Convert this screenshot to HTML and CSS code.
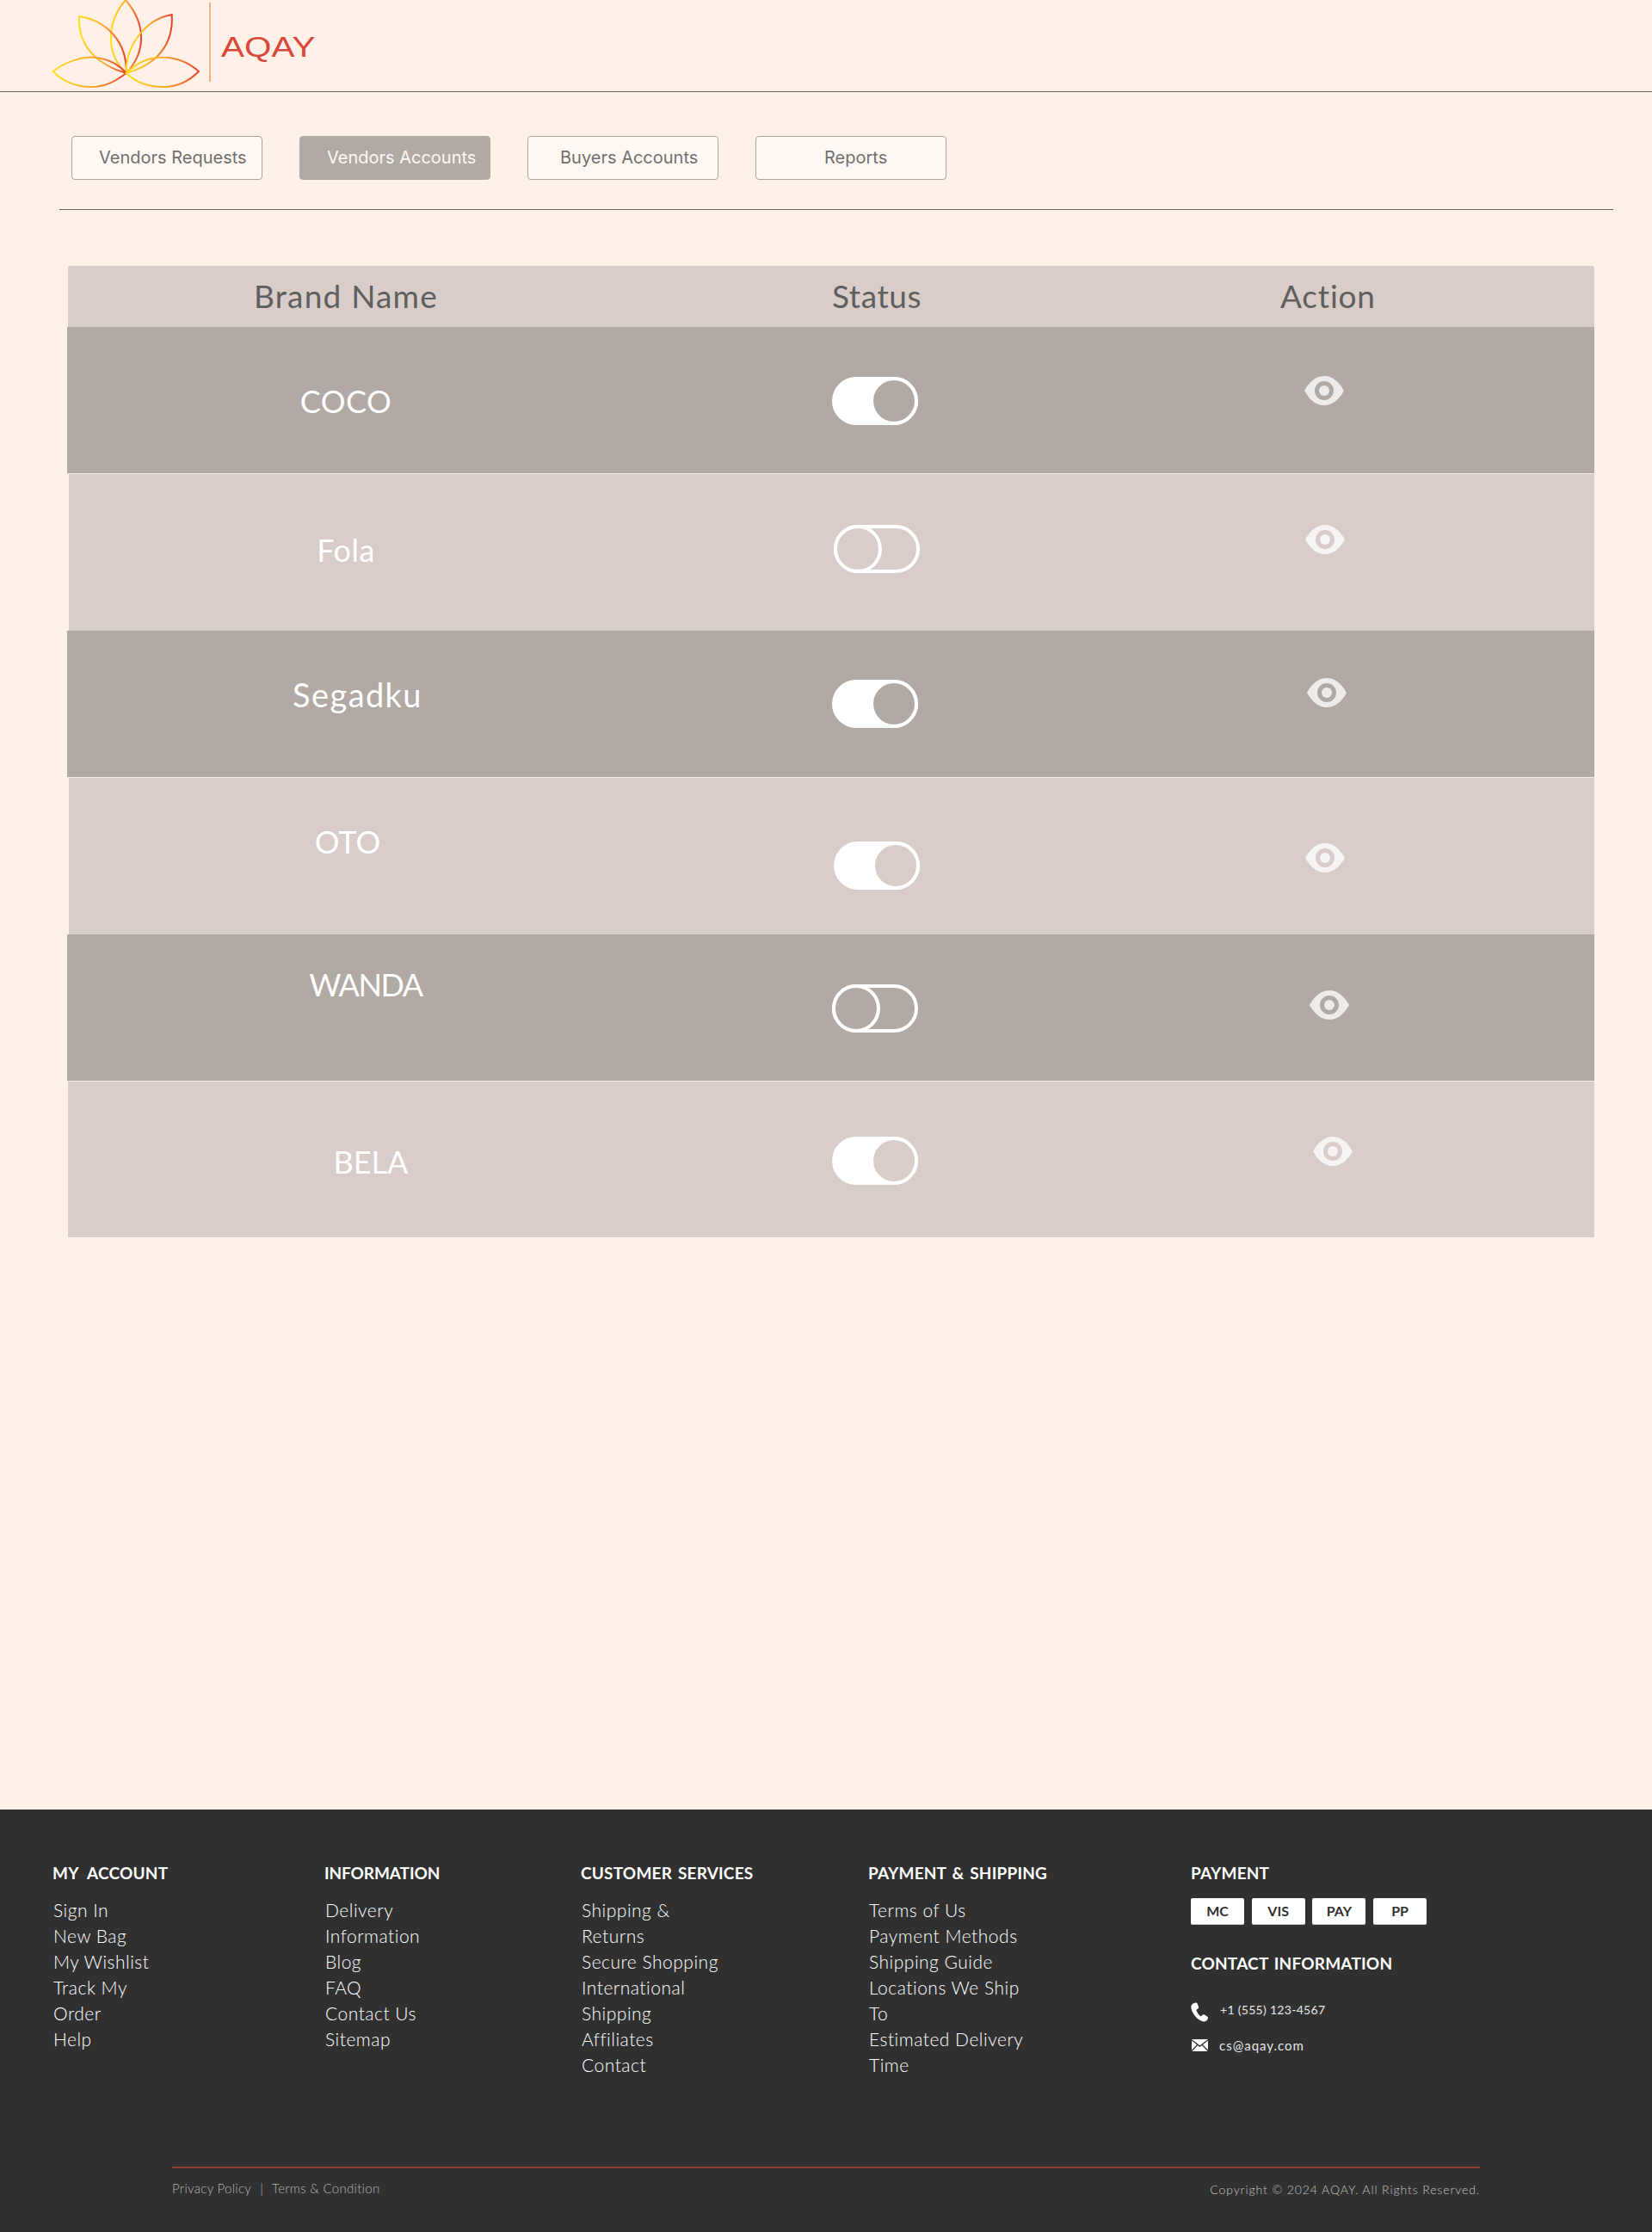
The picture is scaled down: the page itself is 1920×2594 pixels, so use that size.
FILE: index.html
```html
<!DOCTYPE html>
<html lang="en">
<head>
    <meta charset="UTF-8">
    <meta name="viewport" content="width=device-width, initial-scale=1.0">
    <title>AQAY - Vendors Accounts</title>
    <link rel="stylesheet" href="styles.css">
</head>
<body>
<svg class="svg-defs" width="0" height="0">
    <symbol id="eye-shape" viewBox="0 0 46 34">
        <path fill-rule="evenodd" d="M0 17C6 6 14 0 23 0C32 0 40 6 46 17C40 28 32 34 23 34C14 34 6 28 0 17ZM23 6A11 11 0 1 0 23 28A11 11 0 1 0 23 6Z"/>
        <circle cx="23" cy="17" r="6"/>
    </symbol>
</svg>
<div class="page">
    <header class="topbar">
        <svg class="logo" viewBox="60 0 175 106" width="175" height="106" fill="none" stroke="url(#petal)" stroke-width="2">
            <defs>
                <linearGradient id="petal" x1="0" y1="0" x2="1" y2="0">
                    <stop offset="0" stop-color="#ffdf1c"/>
                    <stop offset="0.5" stop-color="#fdb02c"/>
                    <stop offset="1" stop-color="#e8432f"/>
                </linearGradient>
            </defs>
            <path d="M146.7 85C122 62 124 25 146 0C170 28 170 60 146.7 85Z"/>
            <path d="M92 19C125 24 148 50 146.7 85C115 76 90 55 92 19Z"/>
            <path d="M146.7 85C146 52 170 22 199.7 17C202 52 182 75 146.7 85Z"/>
            <path d="M61.7 83C78 70 100 65 112 67C128 69 138 75 146.7 85C130 98 118 101 105 101C88 101 72 94 61.7 83Z"/>
            <path d="M146.7 85C160 72 175 66 190 66.7C205 67 220 73 231 83C220 94 205 101 190 101C172 101 158 96 146.7 85Z"/>
        </svg>
        <span class="logo-divider"></span>
        <span class="logo-name">AQAY</span>
    </header>

    <main class="content">
        <nav class="tabs">
            <a class="tab">Vendors Requests</a>
            <a class="tab tab-active">Vendors Accounts</a>
            <a class="tab tab-buyers">Buyers Accounts</a>
            <a class="tab tab-reports">Reports</a>
        </nav>
        <div class="tabs-rule"></div>

        <section class="accounts">
            <div class="accounts-head">
                <div class="head-name">Brand Name</div>
                <div class="head-status">Status</div>
                <div class="head-action">Action</div>
            </div>

            <div class="account account-dark row-coco">
                <div class="brand">COCO</div>
                <div class="toggle toggle-on"><span class="knob"></span></div>
                <svg class="eye" viewBox="0 0 46 34" width="46" height="34"><use href="#eye-shape"/></svg>
            </div>
            <div class="account account-light row-fola">
                <div class="brand">Fola</div>
                <div class="toggle"><span class="knob"></span></div>
                <svg class="eye" viewBox="0 0 46 34" width="46" height="34"><use href="#eye-shape"/></svg>
            </div>
            <div class="account account-dark row-segadku">
                <div class="brand">Segadku</div>
                <div class="toggle toggle-on"><span class="knob"></span></div>
                <svg class="eye" viewBox="0 0 46 34" width="46" height="34"><use href="#eye-shape"/></svg>
            </div>
            <div class="account account-light row-oto">
                <div class="brand">OTO</div>
                <div class="toggle toggle-on"><span class="knob"></span></div>
                <svg class="eye" viewBox="0 0 46 34" width="46" height="34"><use href="#eye-shape"/></svg>
            </div>
            <div class="account account-dark row-wanda">
                <div class="brand">WANDA</div>
                <div class="toggle"><span class="knob"></span></div>
                <svg class="eye" viewBox="0 0 46 34" width="46" height="34"><use href="#eye-shape"/></svg>
            </div>
            <div class="account account-light row-bela">
                <div class="brand">BELA</div>
                <div class="toggle toggle-on"><span class="knob"></span></div>
                <svg class="eye" viewBox="0 0 46 34" width="46" height="34"><use href="#eye-shape"/></svg>
            </div>
        </section>
    </main>

    <footer class="footer">
        <div class="footer-cols">
            <div class="footer-col col-account">
                <h4>MY ACCOUNT</h4>
                <ul>
                    <li>Sign In</li>
                    <li>New Bag</li>
                    <li>My Wishlist</li>
                    <li>Track My<br>Order</li>
                    <li>Help</li>
                </ul>
            </div>
            <div class="footer-col col-info">
                <h4>INFORMATION</h4>
                <ul>
                    <li>Delivery<br>Information</li>
                    <li>Blog</li>
                    <li>FAQ</li>
                    <li>Contact Us</li>
                    <li>Sitemap</li>
                </ul>
            </div>
            <div class="footer-col col-service">
                <h4>CUSTOMER SERVICES</h4>
                <ul>
                    <li>Shipping &amp;<br>Returns</li>
                    <li>Secure Shopping</li>
                    <li>International<br>Shipping</li>
                    <li>Affiliates</li>
                    <li>Contact</li>
                </ul>
            </div>
            <div class="footer-col col-shipping">
                <h4>PAYMENT &amp; SHIPPING</h4>
                <ul>
                    <li>Terms of Us</li>
                    <li>Payment Methods</li>
                    <li>Shipping Guide</li>
                    <li>Locations We Ship<br>To</li>
                    <li>Estimated Delivery<br>Time</li>
                </ul>
            </div>
            <div class="footer-col col-contact">
                <h4>PAYMENT</h4>
                <div class="pay-badges">
                    <span class="pay-badge">MC</span>
                    <span class="pay-badge">VIS</span>
                    <span class="pay-badge">PAY</span>
                    <span class="pay-badge">PP</span>
                </div>
                <h4 class="contact-title">CONTACT INFORMATION</h4>
                <div class="contact-line contact-phone">
                    <svg viewBox="0 0 21 23" width="21" height="23"><path fill="#fff" d="M5.5 0.5C6.5 0.3 7.3 0.8 7.7 1.8L9 5.2C9.3 6.1 9 6.9 8.2 7.5L6.7 8.5C6.4 8.8 6.4 9.2 6.6 9.7C7.6 12.1 9.1 14.3 11 16C11.4 16.3 11.8 16.3 12.1 16L13.5 14.7C14.2 14.1 15 14 15.8 14.5L19 16.5C19.9 17.1 20.2 17.9 19.8 18.9C19 21 17.2 22.6 15 22.4C10.8 22 6.7 18.7 3.8 14.6C1.6 11.4 0.2 8 0.3 5.1C0.4 2.9 3 0.9 5.5 0.5Z"/></svg>
                    <span>+1 (555) 123-4567</span>
                </div>
                <div class="contact-line contact-mail">
                    <svg viewBox="0 0 19 14" width="19" height="14"><path fill="#fff" d="M0 0H19L9.5 7.2ZM0 1.6L6 6.3L0 12.4ZM19 1.6V12.4L13 6.3ZM7 7.1L9.5 9L12 7.1L18.5 14H0.5Z"/></svg>
                    <span>cs@aqay.com</span>
                </div>
            </div>
        </div>
        <div class="footer-legal">
            <div class="legal-links">Privacy Policy<span class="legal-sep">|</span>Terms &amp; Condition</div>
            <div class="legal-copy">Copyright © 2024 AQAY. All Rights Reserved.</div>
        </div>
    </footer>
</div>
</body>
</html>
```

FILE: styles.css
```css
body {
    margin: 0;
    background-color: #fff1e8;
    font-family: "Lato", "Open Sans", sans-serif;
}

.page {
    display: flex;
    flex-direction: column;
    min-height: 100vh;
}

.svg-defs {
    position: absolute;
}

/* top bar */
.topbar {
    display: flex;
    align-items: flex-start;
    height: 106px;
    padding-left: 60px;
    border-bottom: 1px solid #666;
}

.logo {
    display: block;
    flex: none;
}

.logo-divider {
    width: 2px;
    height: 92px;
    margin: 3px 0 0 8px;
    background-color: #fbb07f;
}

.logo-name {
    margin: 33px 0 0 12px;
    font-family: "Liberation Sans", sans-serif;
    font-size: 34px;
    line-height: 43px;
    color: #d9483a;
    transform: scaleX(1.19);
    transform-origin: left center;
}

/* tabs */
.content {
    flex: 1;
}

.tabs {
    display: flex;
    gap: 43px;
    padding: 51px 0 0 83px;
}

.tab {
    box-sizing: border-box;
    width: 222px;
    height: 51px;
    padding-left: 31px;
    border: 1px solid #aba39e;
    border-radius: 4px;
    background-color: #fff8f3;
    font-family: "Inter", sans-serif;
    font-size: 20px;
    line-height: 49px;
    color: #707070;
}

.tab-active {
    border-color: #b1a9a4;
    background-color: #b1a9a4;
    color: #fff8f3;
}

.tab-buyers {
    padding-left: 37px;
}

.tab-reports {
    padding-left: 79px;
}

.tabs-rule {
    height: 1px;
    margin: 34px 45px 0 69px;
    background-color: #666;
}

/* accounts table */
.accounts {
    margin: 65px 67px 0 78px;
}

.accounts-head {
    display: grid;
    grid-template-columns: 888px 521px 1fr;
    height: 71px;
    margin-left: 1px;
    border-radius: 3px 3px 0 0;
    background-color: #d8cdc8;
    font-size: 37px;
    letter-spacing: 1.2px;
    line-height: 70px;
    color: #5f5f5f;
}

.head-name {
    width: 646px;
    text-align: center;
}

.head-status {
    width: 102px;
    letter-spacing: 0.6px;
    white-space: nowrap;
}

.head-action {
    letter-spacing: 0.8px;
    white-space: nowrap;
}

.account {
    display: grid;
    grid-template-columns: 889px 521px 1fr;
    align-items: start;
    box-sizing: border-box;
    background-color: var(--row-bg);
}

.account-dark {
    --row-bg: #b1a9a4;
    height: 171px;
    border-bottom: 1px solid #f3ece7;
}

.account-light {
    --row-bg: #d8cdc8;
    height: 182px;
    margin-left: 2px;
}

.brand {
    box-sizing: border-box;
    width: 648px;
    padding-left: var(--name-shift, 0);
    margin-top: var(--name-top);
    font-size: var(--name-size, 36px);
    line-height: 40px;
    letter-spacing: var(--name-spacing, 0);
    text-align: center;
    color: #fff;
}

.toggle {
    display: flex;
    box-sizing: border-box;
    width: 100px;
    height: 56px;
    margin-top: var(--toggle-top);
    border: 4px solid #fff;
    border-radius: 28px;
}

.toggle-on {
    justify-content: flex-end;
    background-color: #fff;
}

.knob {
    box-sizing: border-box;
    flex: none;
    width: 56px;
    height: 56px;
    margin: -4px;
    border: 4px solid #fff;
    border-radius: 50%;
    background-color: var(--row-bg);
}

.eye {
    display: block;
    margin-top: var(--eye-top);
    margin-left: var(--eye-left);
    fill: #fff;
    opacity: 0.78;
}

.row-coco {
    --name-top: 66px;
    --name-spacing: 0.5px;
    --toggle-top: 58px;
    --eye-top: 57px;
    --eye-left: 28px;
}

.row-fola {
    --name-top: 68px;
    --name-spacing: 0.5px;
    --toggle-top: 59px;
    --eye-top: 59px;
    --eye-left: 27px;
}

.row-fola .brand {
    margin-left: -2px;
}

.row-segadku {
    --name-top: 54px;
    --name-shift: 27px;
    --name-size: 38px;
    --name-spacing: 1.4px;
    --toggle-top: 57px;
    --eye-top: 55px;
    --eye-left: 31px;
}

.row-oto {
    --name-top: 54px;
    --toggle-top: 74px;
    --eye-top: 76px;
    --eye-left: 27px;
}

.row-wanda {
    --name-top: 38px;
    --name-shift: 46px;
    --name-spacing: -1.4px;
    --toggle-top: 58px;
    --eye-top: 65px;
    --eye-left: 34px;
}

.row-bela {
    --name-top: 73px;
    --name-shift: 56px;
    --toggle-top: 64px;
    --eye-top: 64px;
    --eye-left: 37px;
    height: 181px;
    margin-left: 1px;
}

.row-bela .toggle {
    margin-left: -1px;
}

/* footer */
.footer {
    height: 491px;
    box-sizing: border-box;
    padding-top: 59px;
    background-color: #303030;
    color: #fff;
}

.footer-cols {
    display: flex;
    height: 356px;
    padding-left: 61px;
}

.col-account { width: 316px; }
.col-info { width: 298px; }
.col-service { width: 334px; }
.col-shipping { width: 375px; }

.footer-col h4 {
    margin: 0 0 13px;
    font-size: 19px;
    font-weight: 700;
    line-height: 30px;
    letter-spacing: 0.2px;
    word-spacing: 2px;
}

.col-account h4 {
    word-spacing: 6px;
}

.col-info h4 {
    letter-spacing: -0.1px;
}

.footer-col ul {
    margin: 0;
    padding: 0 0 0 1px;
    list-style: none;
    font-size: 21px;
    font-weight: 300;
    line-height: 30px;
    letter-spacing: 0.5px;
}

.pay-badges {
    display: flex;
    gap: 8.7px;
    margin-top: 14px;
}

.pay-badge {
    box-sizing: border-box;
    width: 62px;
    height: 31px;
    border-bottom: 1px solid #ccc;
    border-radius: 2px;
    background-color: #fff;
    font-size: 16px;
    font-weight: 700;
    line-height: 29px;
    text-align: center;
    color: #303030;
}

.footer-col .contact-title {
    margin: 30px 0 0;
}

.contact-line {
    display: flex;
    gap: 13px;
    font-size: 14px;
    font-weight: 400;
    letter-spacing: 0.3px;
    color: #e6e6e6;
}

.contact-phone {
    align-items: flex-start;
    margin-top: 30px;
    line-height: 18px;
}

.contact-phone svg {
    flex: none;
}

.contact-mail {
    align-items: center;
    margin-top: 18px;
    padding-left: 1px;
    font-size: 15px;
    letter-spacing: 1px;
}

.footer-legal {
    display: flex;
    justify-content: space-between;
    margin: 0 200px;
    padding-top: 13px;
    border-top: 2px solid #8f3c33;
    font-size: 15px;
    font-weight: 300;
    line-height: 20px;
    letter-spacing: 0.3px;
}

.legal-links {
    color: #b5b5b5;
}

.legal-sep {
    margin: 0 10px;
}

.legal-copy {
    margin-top: 2px;
    font-size: 14px;
    letter-spacing: 0.9px;
    color: #c8c8c8;
}
```
